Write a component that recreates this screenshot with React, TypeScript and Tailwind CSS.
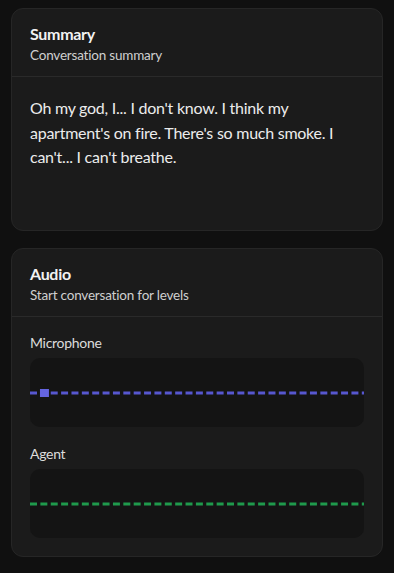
import React from "react";

function Meter({ color, thick, knob }: { color: string; thick: number; knob?: boolean }) {
  return (
    <div className="mt-[5px] h-[69px] rounded-[10px] bg-[#141414] flex items-center overflow-hidden">
      <svg width="100%" height="12" viewBox="0 0 335 12" preserveAspectRatio="none" className="block">
        <line x1="0" y1="6" x2="335" y2="6" stroke={color} strokeWidth={thick} strokeDasharray="7 3.4" />
        {knob && <rect x="10" y="2" width="9" height="8" fill="#6464e0" />}
      </svg>
    </div>
  );
}

function CardHeader({ title, sub }: { title: string; sub: string }) {
  return (
    <div className="px-[18px] pt-[15px] pb-[12px] border-b border-[#2a2a2a]">
      <div className="text-[16px] leading-5 font-bold tracking-[-0.3px] text-[#f2f2f2]">{title}</div>
      <div className="mt-[2px] text-[13.5px] leading-[18px] tracking-[-0.2px] text-[#cfcfcf]">{sub}</div>
    </div>
  );
}

export default function App() {
  return (
    <div
      className="min-h-[573px] bg-[#101010] px-[11px] pt-2 pb-4 flex flex-col gap-[17px]"
      style={{ fontFamily: 'Lato, "Open Sans", sans-serif' }}
    >
      <section className="rounded-xl border border-[#262626] bg-[#1b1b1b]">
        <CardHeader title="Summary" sub="Conversation summary" />
        <div className="px-[18px] pt-[19px] h-[153px]">
          <p className="text-[16px] leading-[24.5px] tracking-[-0.25px] text-[#ececec]">
            Oh my god, I... I don't know. I think my apartment's on fire. There's so much smoke. I can't... I can't
            breathe.
          </p>
        </div>
      </section>

      <section className="rounded-xl border border-[#262626] bg-[#1b1b1b]">
        <CardHeader title="Audio" sub="Start conversation for levels" />
        <div className="px-[18px] pt-4 pb-[18px]">
          <div className="text-[14px] leading-5 tracking-[-0.3px] text-[#dcdcdc]">Microphone</div>
          <Meter color="#5757d0" thick={3} knob />
          <div className="mt-[17px] text-[14px] leading-5 tracking-[-0.3px] text-[#dcdcdc]">Agent</div>
          <Meter color="#1f9a4c" thick={3} />
        </div>
      </section>
    </div>
  );
}
